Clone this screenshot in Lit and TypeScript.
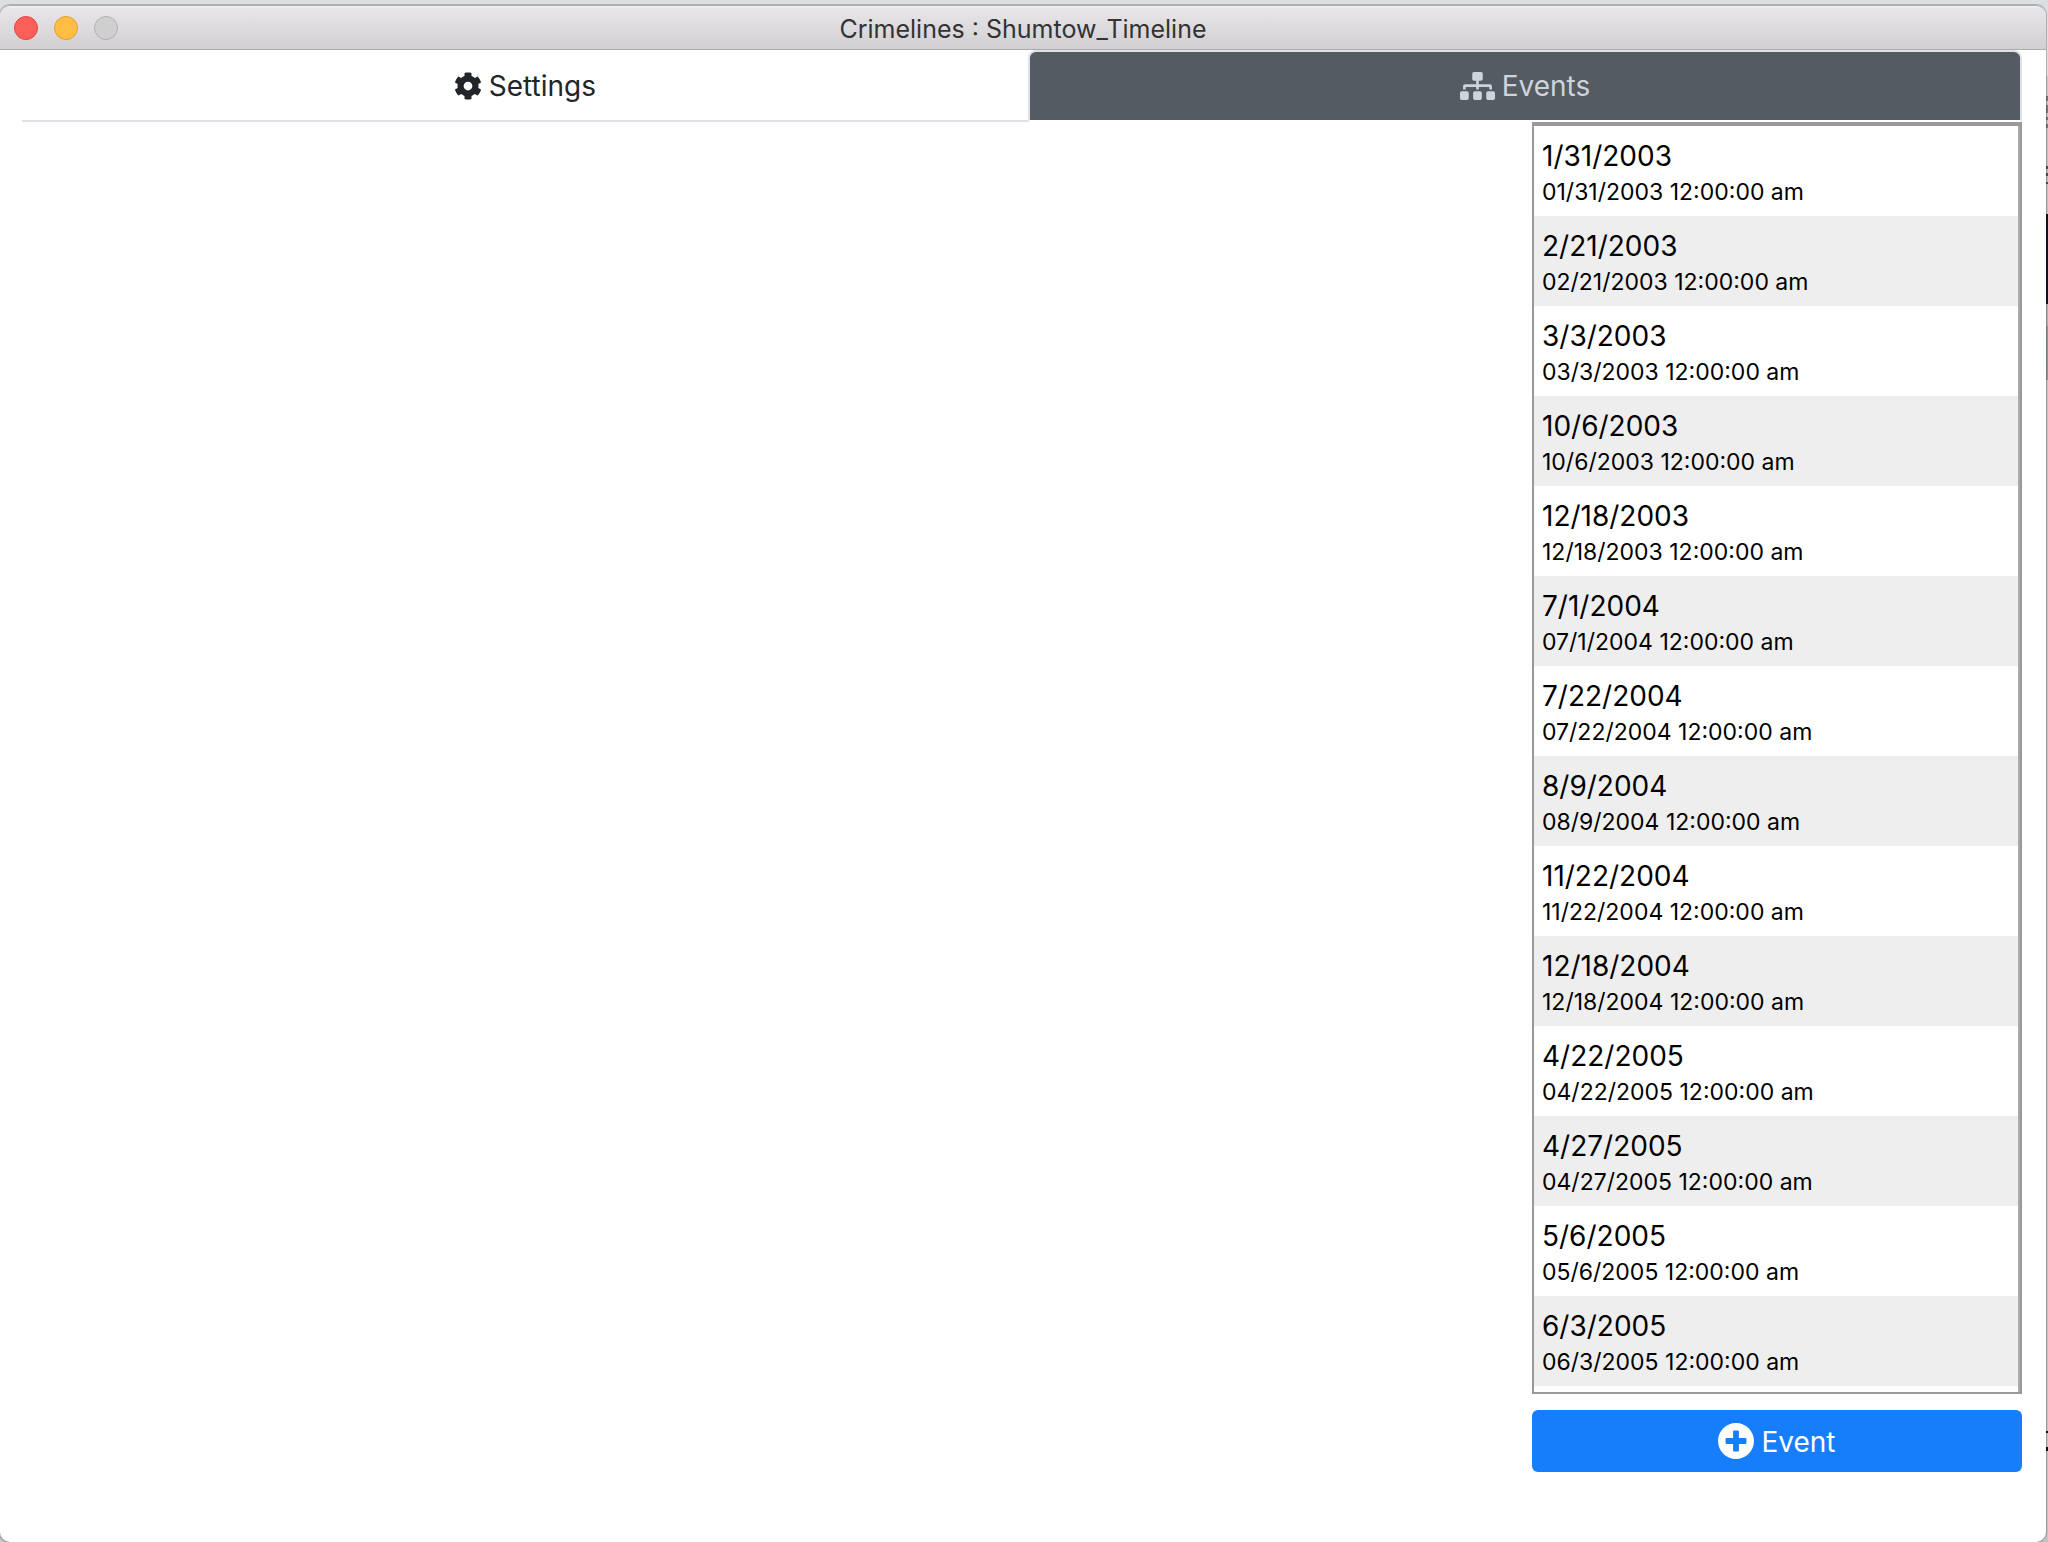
import { LitElement, html, css, svg } from "lit";
import { customElement, property, state } from "lit/decorators.js";

interface TimelineEvent {
  title: string;
  when: string;
}

const EVENTS: TimelineEvent[] = [
  { title: "1/31/2003", when: "01/31/2003 12:00:00 am" },
  { title: "2/21/2003", when: "02/21/2003 12:00:00 am" },
  { title: "3/3/2003", when: "03/3/2003 12:00:00 am" },
  { title: "10/6/2003", when: "10/6/2003 12:00:00 am" },
  { title: "12/18/2003", when: "12/18/2003 12:00:00 am" },
  { title: "7/1/2004", when: "07/1/2004 12:00:00 am" },
  { title: "7/22/2004", when: "07/22/2004 12:00:00 am" },
  { title: "8/9/2004", when: "08/9/2004 12:00:00 am" },
  { title: "11/22/2004", when: "11/22/2004 12:00:00 am" },
  { title: "12/18/2004", when: "12/18/2004 12:00:00 am" },
  { title: "4/22/2005", when: "04/22/2005 12:00:00 am" },
  { title: "4/27/2005", when: "04/27/2005 12:00:00 am" },
  { title: "5/6/2005", when: "05/6/2005 12:00:00 am" },
  { title: "6/3/2005", when: "06/3/2005 12:00:00 am" },
];

const ICONS = {
  cog: {
    box: "0 0 512 512",
    shape: svg`<path d="M487.4 315.7l-42.6-24.6c4.3-23.2 4.3-47 0-70.2l42.6-24.6c4.9-2.8 7.1-8.6 5.5-14-11.1-35.6-30-67.8-54.7-94.6-3.8-4.1-10-5.1-14.8-2.3L380.8 110c-17.9-15.4-38.5-27.3-60.8-35.1V25.8c0-5.6-3.9-10.5-9.4-11.7-36.7-8.2-74.3-7.8-109.2 0-5.5 1.2-9.4 6.1-9.4 11.7V75c-22.2 7.9-42.8 19.8-60.8 35.1L88.7 85.5c-4.9-2.8-11-1.9-14.8 2.3-24.7 26.7-43.6 58.9-54.7 94.6-1.7 5.4.6 11.2 5.5 14L67.3 221c-4.3 23.2-4.3 47 0 70.2l-42.6 24.6c-4.9 2.8-7.1 8.6-5.5 14 11.1 35.6 30 67.8 54.7 94.6 3.8 4.1 10 5.1 14.8 2.3l42.6-24.6c17.9 15.4 38.5 27.3 60.8 35.1v49.2c0 5.6 3.9 10.5 9.4 11.7 36.7 8.2 74.3 7.8 109.2 0 5.5-1.2 9.4-6.1 9.4-11.7v-49.2c22.2-7.9 42.8-19.8 60.8-35.1l42.6 24.6c4.9 2.8 11 1.9 14.8-2.3 24.7-26.7 43.6-58.9 54.7-94.6 1.5-5.5-.7-11.3-5.6-14.1zM256 336c-44.1 0-80-35.9-80-80s35.9-80 80-80 80 35.9 80 80-35.9 80-80 80z"/>`,
  },
  sitemap: {
    box: "0 0 640 512",
    shape: svg`<path d="M128 352H32c-17.67 0-32 14.33-32 32v96c0 17.67 14.33 32 32 32h96c17.67 0 32-14.33 32-32v-96c0-17.67-14.33-32-32-32zm-24-80h192v48h48v-48h192v48h48v-57.59c0-21.17-17.23-38.41-38.41-38.41H344v-64h40c17.67 0 32-14.33 32-32V32c0-17.67-14.33-32-32-32H256c-17.67 0-32 14.33-32 32v96c0 17.67 14.33 32 32 32h40v64H94.41C73.23 224 56 241.23 56 262.41V320h48v-48zm264 80h-96c-17.67 0-32 14.33-32 32v96c0 17.67 14.33 32 32 32h96c17.67 0 32-14.33 32-32v-96c0-17.67-14.33-32-32-32zm240 0h-96c-17.67 0-32 14.33-32 32v96c0 17.67 14.33 32 32 32h96c17.67 0 32-14.33 32-32v-96c0-17.67-14.33-32-32-32z"/>`,
  },
  plus: {
    box: "8 8 496 496",
    shape: svg`<path d="M256 8C119 8 8 119 8 256s111 248 248 248 248-111 248-248S393 8 256 8zm144 276c0 6.6-5.4 12-12 12h-92v92c0 6.6-5.4 12-12 12h-56c-6.6 0-12-5.4-12-12v-92h-92c-6.6 0-12-5.4-12-12v-56c0-6.6 5.4-12 12-12h92v-92c0-6.6 5.4-12 12-12h56c6.6 0 12 5.4 12 12v92h92c6.6 0 12 5.4 12 12v56z"/>`,
  },
};

@customElement("app-icon")
export class AppIcon extends LitElement {
  @property() name: keyof typeof ICONS = "cog";

  static styles = css`
    :host {
      display: inline-flex;
      height: 28px;
    }
    .glyph {
      height: 100%;
      fill: currentColor;
    }
  `;

  render() {
    const icon = ICONS[this.name];
    return html`<svg class="glyph" viewBox=${icon.box} aria-hidden="true">${icon.shape}</svg>`;
  }
}

@customElement("title-bar")
export class TitleBar extends LitElement {
  @property() heading = "";

  static styles = css`
    :host {
      display: grid;
      grid-template-columns: 1fr auto 1fr;
      align-items: center;
      box-sizing: border-box;
      height: 45px;
      padding: 0 14px;
      border-top: 1px solid #a9acae;
      border-bottom: 1px solid #aeabae;
      border-radius: 10px 10px 0 0;
      background: linear-gradient(#f6f5f6, #e8e6e9 2px, #d2cfd2);
    }
    .lights {
      display: flex;
      gap: 16px;
    }
    .light {
      box-sizing: border-box;
      width: 24px;
      height: 24px;
      padding: 0;
      border: 1px solid #e2453f;
      border-radius: 50%;
      background: #fc605b;
    }
    .minimize {
      border-color: #e09f35;
      background: #fdbe41;
    }
    .zoom {
      border-color: #b0b0b0;
      background: #cfcfcf;
    }
    .heading {
      margin: 0;
      padding-top: 2px;
      font-size: 25px;
      font-weight: 400;
      line-height: 32px;
      color: #333333;
    }
  `;

  render() {
    return html`
      <div class="lights">
        <button class="light" aria-label="Close"></button>
        <button class="light minimize" aria-label="Minimize"></button>
        <button class="light zoom" aria-label="Zoom" disabled></button>
      </div>
      <h1 class="heading">${this.heading}</h1>
    `;
  }
}

@customElement("event-list")
export class EventList extends LitElement {
  @property({ attribute: false }) events: TimelineEvent[] = [];

  static styles = css`
    :host {
      display: block;
      box-sizing: border-box;
      overflow: auto;
      border: 2px solid #999999;
      border-top-width: 4px;
      scrollbar-width: none;
    }
    .events {
      box-sizing: border-box;
      min-height: 100%;
      margin: 0;
      padding: 0;
      border-right: 2px solid #a9aaa9;
      list-style: none;
    }
    .event:nth-child(even) {
      background: #eeeeee;
    }
    .open {
      display: flex;
      flex-direction: column;
      box-sizing: border-box;
      width: 100%;
      height: 90px;
      padding: 10px 8px;
      border: 0;
      background: none;
      font: inherit;
      color: #000000;
      text-align: left;
      cursor: pointer;
    }
    .title {
      font-size: 28px;
      line-height: 40px;
    }
    .when {
      font-size: 23px;
      line-height: 32px;
    }
  `;

  render() {
    return html`
      <ul class="events">
        ${this.events.map(
          (e) => html`
            <li class="event">
              <button class="open">
                <span class="title">${e.title}</span>
                <span class="when">${e.when}</span>
              </button>
            </li>
          `
        )}
      </ul>
    `;
  }
}

@customElement("app-root")
export class AppRoot extends LitElement {
  @state() private events = EVENTS;

  static styles = css`
    :host {
      display: block;
      box-sizing: border-box;
      height: 100vh;
      padding: 5px 2px 0 0;
      overflow: hidden;
      background: linear-gradient(
        #dbdfe1 76px,
        #c8c8c8 76px 96px,
        #777777 96px 101px,
        #c0c0c0 101px 105px,
        #777777 105px 113px,
        #c0c0c0 113px 117px,
        #777777 117px 120px,
        #c0c0c0 120px 124px,
        #777777 124px 128px,
        #c0c0c0 128px 166px,
        #4a5058 166px 169px,
        #b8babc 169px 173px,
        #4a5058 173px 176px,
        #b8babc 176px 182px,
        #4a5058 182px 184px,
        #c0c0c0 184px 214px,
        #0d1420 214px 304px,
        #b0b0b0 304px 326px,
        #8f989f 326px 380px,
        #c2c2c2 380px 1431px,
        #111111 1431px 1433px,
        #c2c2c2 1433px 1447px,
        #111111 1447px 1451px,
        #c2c2c2 1451px
      );
      font-family: Inter, "Liberation Sans", sans-serif;
    }
    .window {
      display: flex;
      flex-direction: column;
      height: 100%;
      border-radius: 10px;
      background: #ffffff;
      box-shadow: 0 0 0 1px rgba(0, 0, 0, 0.2);
    }
    .tabs {
      display: flex;
      margin: 0 24px 0 22px;
      box-shadow: inset 0 -2px #dee2e6;
    }
    .tab {
      display: flex;
      flex: 1 1 auto;
      align-items: center;
      justify-content: center;
      gap: 7px;
      height: 72px;
      padding: 0 32px;
      border: 2px solid transparent;
      border-radius: 8px 8px 0 0;
      background: none;
      font: inherit;
      font-size: 28px;
      line-height: 40px;
      color: #212529;
      cursor: pointer;
    }
    .tab.active {
      border-color: #dee2e6 #dee2e6 #ffffff;
      background: #545b62;
      color: #ced4da;
    }
    .content {
      display: grid;
      flex: 1;
      grid-template-columns: 3fr 1fr;
      min-height: 0;
      padding: 0 24px 70px 22px;
    }
    .sidebar {
      display: flex;
      flex-direction: column;
      gap: 16px;
      min-height: 0;
      padding-left: 10px;
    }
    .list {
      flex: 1;
      min-height: 0;
    }
    .add {
      display: flex;
      align-items: center;
      justify-content: center;
      gap: 7px;
      height: 62px;
      border: 0;
      border-radius: 6px;
      background: #167efb;
      font: inherit;
      font-size: 28px;
      line-height: 40px;
      color: #ffffff;
      cursor: pointer;
    }
    .add-icon {
      height: 36px;
    }
    .add-label {
      padding-top: 2px;
    }
  `;

  render() {
    return html`
      <div class="window">
        <title-bar heading="Crimelines : Shumtow_Timeline"></title-bar>
        <div class="tabs" role="tablist">
          <button class="tab" role="tab" aria-selected="false">
            <app-icon name="cog"></app-icon><span>Settings</span>
          </button>
          <button class="tab active" role="tab" aria-selected="true">
            <app-icon name="sitemap"></app-icon><span>Events</span>
          </button>
        </div>
        <main class="content">
          <section class="timeline" aria-label="Timeline"></section>
          <aside class="sidebar">
            <event-list class="list" .events=${this.events}></event-list>
            <button class="add">
              <app-icon class="add-icon" name="plus"></app-icon><span class="add-label">Event</span>
            </button>
          </aside>
        </main>
      </div>
    `;
  }
}
